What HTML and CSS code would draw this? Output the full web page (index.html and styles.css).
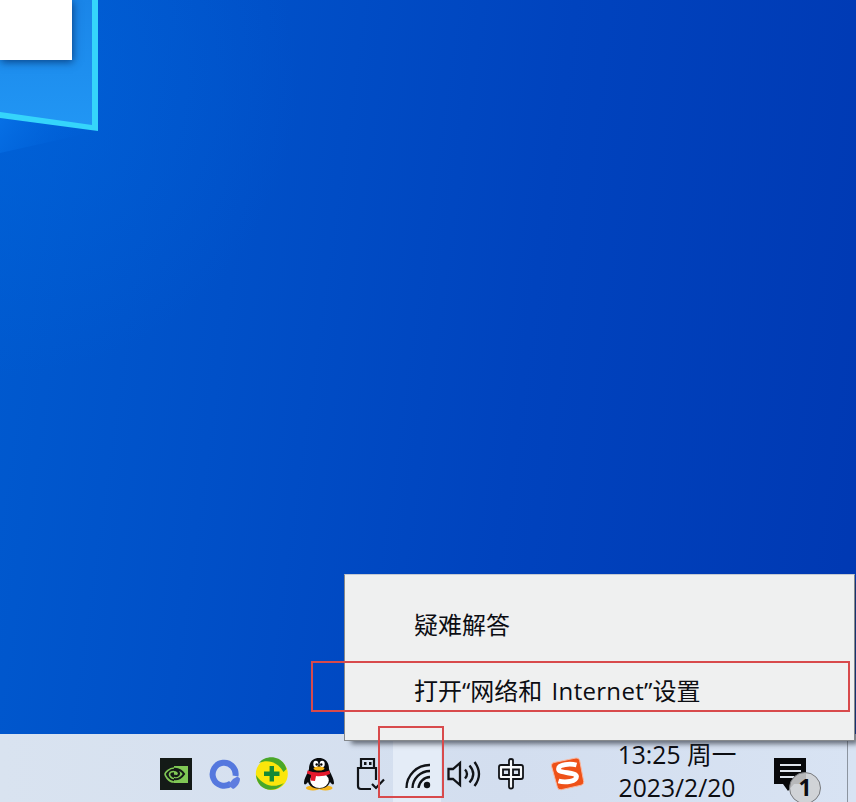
FILE: index.html
```html
<!DOCTYPE html>
<html lang="zh-CN">
<head>
  <meta charset="UTF-8">
  <title>桌面</title>
  <link rel="stylesheet" href="styles.css">
</head>
<body>
  <div class="desktop">
    <svg class="wallpaper" width="856" height="734" viewBox="0 0 856 734">
      <defs>
        <linearGradient id="beam" x1="0" y1="0" x2="1" y2="0.25">
          <stop offset="0" stop-color="#0670e6"/>
          <stop offset="1" stop-color="#0060d8" stop-opacity="0"/>
        </linearGradient>
        <linearGradient id="glass" x1="0" y1="0" x2="0" y2="1">
          <stop offset="0" stop-color="#1a85e8"/>
          <stop offset="1" stop-color="#2196f4"/>
        </linearGradient>
      </defs>
      <path d="M0 118 L98 131 L0 153 Z" fill="url(#beam)"/>
      <path d="M0 0 H98 V131 L0 118 Z" fill="#35d5fb"/>
      <path d="M0 0 H92 V125 L0 112 Z" fill="url(#glass)"/>
    </svg>
    <div class="window"></div>
  </div>

  <div class="taskbar">
    <div class="tray">
      <!-- NVIDIA -->
      <svg class="tray-icon" width="48" height="68" viewBox="0 0 48 68">
        <path d="M8 24h32v32H8z" fill="#141a17"/>
        <path d="M22 32h14v17H22z" fill="#80c855"/>
        <path d="M21 35c6-1 10 3 11 5-2 3-6 6-10 5-4 0-5-3-5-5s2-4 5-4 5 2 5 3.500-2 3.500-5 2" fill="none" stroke="#141a17" stroke-width="2.200"/>
        <path d="M22 34c-5 0-9 5-9 6s3 8 9 8M22 37.500c-3 0-4.500 1.500-4.500 3s2 4 4.500 4" fill="none" stroke="#80c855" stroke-width="1.700"/>
      </svg>
      <!-- Quark -->
      <svg class="tray-icon" width="48" height="68" viewBox="0 0 48 68">
        <path d="M35.500 42A11.500 11.500 0 1 0 31 49.500" fill="none" stroke="#5578de" stroke-width="6"/>
        <path d="M33 45l4.500-2.500 2.500 2c0 4-2.500 8.500-7 10.500l-5-4z" fill="#5f7ddf"/>
      </svg>
      <!-- 360 -->
      <svg class="tray-icon" width="48" height="68" viewBox="0 0 48 68">
        <circle cx="23.800" cy="40" r="16" fill="#fbe60b"/>
        <path d="M11 29C17 21 34 20 38.500 35l-3 3C30 28 20 25 11 29z" fill="#49a729"/>
        <path d="M8 41c1 14 15 19 25 11l3-3C27 54 16 53 8 41z" fill="#49a729"/>
        <path d="M23.800 32v15.500M16 39.700h15.500" stroke="#168936" stroke-width="4.400"/>
      </svg>
      <!-- QQ -->
      <svg class="tray-icon" width="46" height="68" viewBox="0 0 46 68">
        <ellipse cx="17" cy="54" rx="7" ry="2.500" fill="#f5b51c"/>
        <ellipse cx="29.500" cy="54" rx="7" ry="2.500" fill="#f5b51c"/>
        <path d="M23 24c-7 0-10 5-10 11-1 4-5 9-5 14 0 2 2 2 4-1 2 5 6 6.500 11 6.500S32 53 34 48c2 3 4 3 4 1 0-5-4-10-5-14 0-6-3-11-10-11z" fill="#090b0e"/>
        <ellipse cx="23.500" cy="46.500" rx="9.300" ry="7.500" fill="#fff"/>
        <ellipse cx="19.800" cy="30" rx="2.500" ry="3.300" fill="#fff"/>
        <ellipse cx="26.200" cy="30" rx="2.500" ry="3.300" fill="#fff"/>
        <circle cx="20.700" cy="30.500" r="1.200"/>
        <circle cx="25.300" cy="30.500" r="1.200"/>
        <ellipse cx="23" cy="34.500" rx="5.500" ry="2" fill="#f9b615"/>
        <path d="M11.500 36.500c7 2.500 15 2.500 22 0l.5 3.500c-5 2-10 2.500-14 2l-1 5-4.500-.5.500-5.500-4-1.500z" fill="#e5192c"/>
      </svg>
      <!-- USB -->
      <svg class="tray-icon" width="51" height="68" viewBox="0 0 51 68">
        <g fill="none" stroke="#111317" stroke-width="2.200">
          <path d="M19 34V25h13v9"/>
          <path d="M34 46V34H16v18q0 3 3 3h10"/>
          <path d="M30 50l4 4 8-8.500"/>
        </g>
        <path d="M22 28h2.500v3H22zM27 28h2.500v3H27z" fill="#111317"/>
      </svg>
      <div class="tray-active">
        <svg class="tray-icon" width="48" height="68" viewBox="0 0 48 68">
          <g fill="none" stroke="#111317" stroke-width="2.300">
            <path d="M13.500 54A23 23 0 0 1 37 31"/>
            <path d="M19.500 54A17.500 17.500 0 0 1 37 37"/>
            <path d="M25.500 54A12 12 0 0 1 37 43"/>
          </g>
          <circle cx="34" cy="51" r="3.200" fill="#111317"/>
        </svg>
      </div>
      <svg class="tray-icon" width="48" height="68" viewBox="0 0 48 68">
        <g fill="none" stroke="#111317" stroke-width="2.300">
          <path d="M7.500 35h4.500l7-6v22l-7-6H7.500z"/>
          <path d="M24 35.500q4 4.500 0 9M28.500 31.500q7.500 8.500 0 17M33.500 28q9 12 0 24"/>
        </g>
      </svg>
      <!-- input method: outlined 中 -->
      <svg class="tray-icon" width="48" height="68" viewBox="0 0 48 68">
        <path d="M20 26.500q0-1.500 2-1.500t2 1.500V31h8q2 0 2 2v10q0 2-2 2h-8v8q0 1.500-2 1.500t-2-1.500V45h-8q-2 0-2-2V33q0-2 2-2h8z" fill="#f8fafc" stroke="#111317" stroke-width="1.800"/>
        <path d="M14 35.500h6v5.500h-6zM24 35.500h6v5.500h-6z" fill="#d7e1ef" stroke="#111317" stroke-width="1.800"/>
      </svg>
      <!-- Sogou -->
      <svg class="tray-icon" width="60" height="68" viewBox="0 0 60 68">
        <path d="M17 28.500l22-4.500q3-.5 3.700 2.500l4 21q.5 3-2.500 3.700l-20 4.500q-3 .6-3.800-2.400L14.500 32q-.5-3 2.500-3.500z" fill="#ee5118" stroke="#f9b79f" stroke-width="1"/>
        <path d="M39.500 31c-6-1.500-18-1-18 4 0 5 18 2.500 18 7.500 0 5-11 6.500-18 4.500" fill="none" stroke="#fff" stroke-width="4.800"/>
      </svg>
    </div>

    <div class="clock">
      <span class="time">13:25 周一</span>
      <span class="date">2023/2/20</span>
    </div>

    <div class="notify">
      <svg width="32" height="34" viewBox="0 0 32 34">
        <path d="M0 0h32v26H20l-6 7-5-7H0z" fill="#08090b"/>
        <path d="M6 7h21M6 13h21M6 19h14" stroke="#dfe5ed" stroke-width="2.200"/>
      </svg>
      <span class="badge">1</span>
    </div>
    <div class="show-desktop"></div>
  </div>

  <div class="menu">
    <div class="menu-item">疑难解答</div>
    <div class="menu-item">打开“网络和 <span class="latin">Internet</span>”设置</div>
  </div>

  <div class="mark mark-settings"></div>
  <div class="mark mark-network"></div>
</body>
</html>
```
FILE: styles.css
```css
body {
  margin: 0;
  width: 856px;
  height: 802px;
  display: flex;
  flex-direction: column;
  position: relative;
  overflow: hidden;
  color: #0c0d12;
  font-family: "Open Sans", "Noto Sans CJK SC", sans-serif;
}

.desktop {
  height: 734px;
  position: relative;
  background:
    radial-gradient(circle at 0 80px, rgba(0, 112, 232, 0.35), rgba(0, 100, 220, 0) 300px),
    linear-gradient(98deg, #005bd0 0%, #0050c8 28%, #0043be 60%, #0038b2 100%);
}

.wallpaper {
  display: block;
}

.window {
  position: absolute;
  top: 0;
  left: 0;
  width: 72px;
  height: 60px;
  background: #fff;
  box-shadow: 1px 2px 8px rgba(0, 35, 90, 0.7);
}

.taskbar {
  height: 68px;
  display: flex;
  background: linear-gradient(90deg, #d9e3f0, #d3deef 60%, #d8e3f3);
}

.tray {
  display: flex;
  margin-left: 152px;
}

.tray-icon {
  display: block;
}

.tray-active {
  background: #e4ecf7;
}

.clock {
  width: 160px;
  display: flex;
  flex-direction: column;
  align-items: center;
  font-size: 24.7px;
  padding-top: 4px;
  box-sizing: border-box;
  white-space: nowrap;
}

.time {
  line-height: 34px;
}

.date {
  margin-top: 2px;
  line-height: 28px;
}

.notify {
  width: 90px;
  box-sizing: border-box;
  padding: 24px 0 0 17px;
  position: relative;
}

.badge {
  position: absolute;
  left: 32px;
  top: 38px;
  width: 30px;
  height: 30px;
  border: 1px solid #77797d;
  border-radius: 50%;
  background: rgba(207, 208, 211, 0.88);
  font-size: 23px;
  font-weight: 700;
  line-height: 28px;
  text-align: center;
}

.show-desktop {
  border-left: 1px solid #8c949f;
  flex: 1;
}

.menu {
  position: absolute;
  left: 344px;
  top: 574px;
  width: 511px;
  height: 167px;
  box-sizing: border-box;
  padding: 17px 0 0 69px;
  background: #eff0f0;
  border: 1px solid #85888b;
  border-top-color: #c3c9d2;
  box-shadow: 5px 5px 5px -2px rgba(40, 45, 55, 0.65);
}

.menu-item {
  height: 66px;
  line-height: 66px;
  font-size: 24px;
  white-space: nowrap;
}

.latin {
  margin-left: 3px;
  letter-spacing: 0.3px;
}

/* red highlight frames */
.mark {
  position: absolute;
  box-sizing: border-box;
  border: 2px solid #d84a4c;
}

.mark-settings {
  left: 311px;
  top: 661px;
  width: 539px;
  height: 51px;
}

.mark-network {
  left: 378px;
  top: 726px;
  width: 66px;
  height: 72px;
}
```
